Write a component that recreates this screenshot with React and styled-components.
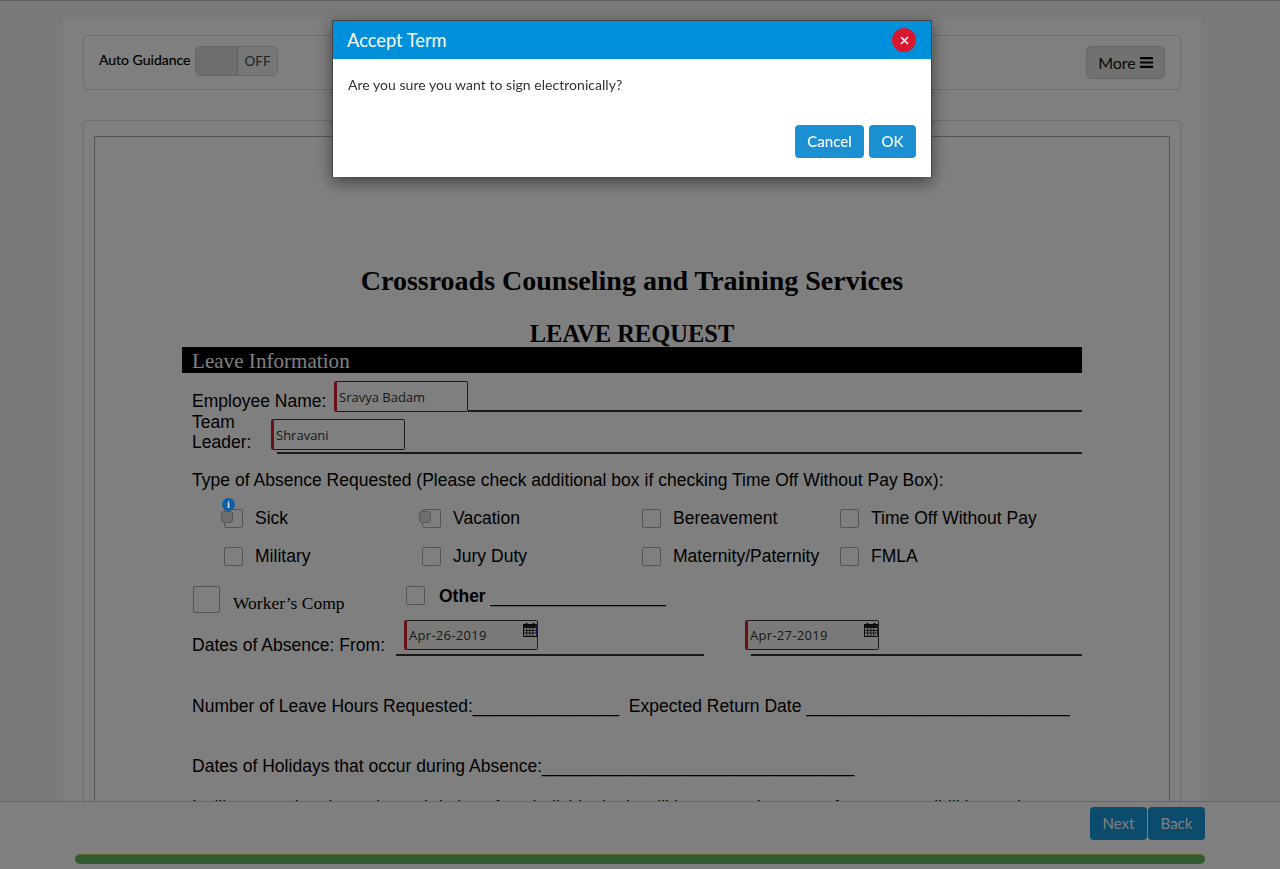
import React from "react";
import styled, { createGlobalStyle } from "styled-components";

const Global = createGlobalStyle`
  html, body { margin: 0; height: 100%; overflow: hidden; background: #f4f4f4; }
  * { box-sizing: border-box; }
`;
const UI = `"Open Sans", "Noto Sans", sans-serif`;
const SANS = `"Liberation Sans", Arial, sans-serif`;
const SERIF = `"Liberation Serif", "Times New Roman", serif`;

const Page = styled.div`
  height: 869px; overflow: hidden; border-top: 1px solid #c4c4c4;
`;
const Container = styled.main`
  width: 1138px; margin: 18px 0 0 63px; padding: 16px 20px 0; background: #fff; height: 900px;
`;
const TopPanel = styled.section`
  height: 55px; border: 1px solid #ddd; border-radius: 4px; padding: 10px 15px 0 15px;
  display: flex; justify-content: space-between; align-items: flex-start;
`;
const GuideLabel = styled.div`display: flex; align-items: flex-start;`;
const GuideText = styled.span`
  font: 400 14px/28px "Lato", ${UI}; color: #000; width: 96px; white-space: nowrap; -webkit-text-stroke: 0.2px #000;
`;
const Toggle = styled.div`
  width: 83px; height: 30px; border: 1px solid #ccc; border-radius: 5px; display: flex; overflow: hidden;
`;
const ToggleOff = styled.div`width: 42px; background: #ddd; border-right: 1px solid #bbb;`;
const ToggleOn = styled.div`
  flex: 1; background: #eee; font: 400 13.5px/29px "Lato", ${UI}; color: #444; text-align: center;
`;
const MoreBtn = styled.button`
  width: 79px; height: 33px; background: #e2e2e2; border: 1px solid #ccc; border-radius: 5px; color: #111;
  font: 400 16px/1 "Lato", ${UI}; display: flex; align-items: center; justify-content: center; gap: 4px; padding: 0;
`;
const DocPanel = styled.section`
  margin-top: 30px; border: 1px solid #ddd; border-radius: 4px; padding: 15px 10px 0; height: 760px;
`;
const Doc = styled.article`
  border: 1px solid #aaa; height: 740px; padding-top: 128px;
`;
const Title = styled.h1`
  margin: 0; text-align: center; font: 700 28px/32px ${SERIF}; color: #000;
`;
const SubTitle = styled.h2`
  margin: 22px 0 0; text-align: center; font: 700 24.5px/30px ${SERIF}; color: #000;
`;
const Form = styled.div`width: 900px; margin: -2px 0 0 87px; color: #000;`;
const BlackBar = styled.div`
  height: 26px; background: #000; color: #fff; padding-left: 10px; font: 400 21px/28px ${SERIF}; letter-spacing: 0.05px;
`;
const BodyText = `font: 400 17.5px/21px ${SANS}; white-space: nowrap; letter-spacing: 0.02px;`;
const Row = styled.div`
  display: flex; align-items: flex-start; padding-left: 10px; ${BodyText}
`;
const NameRow = styled(Row)`margin-top: 8px; height: 30px;`;
const NameLabel = styled.span`padding-top: 10px; width: 142px;`;
const LeaderRow = styled(Row)`margin-top: 8px; height: 34px;`;
const LeaderLabel = styled.span`width: 79px; line-height: 20px; margin-top: -7px; white-space: normal;`;
const Rule = styled.div`
  flex: 1; border-bottom: 2px solid #333; height: 31px;
`;
const LeaderRule = styled.div`
  flex: 1; margin-left: 6px; border-bottom: 2px solid #333; height: 35px;
`;
const Field = styled.div`
  width: 134px; height: ${p => p.$date ? 30 : 31}px; margin-left: ${p => p.$ml || 0}px;
  border: 1px solid #333; border-left: 3px solid #d3232f; border-radius: 2px;
  background: ${p => p.$date ? "#f6f4f2" : "transparent"}; position: relative;
  font: 400 13px/${p => p.$date ? 29 : 30}px ${UI}; padding-left: 2px; color: #333; flex: none;
  letter-spacing: ${p => p.$date ? 0.3 : 0}px;
`;
const CalIcon = styled.svg`position: absolute; top: 1px; right: 0; width: 14px; height: 15px;`;
const Question = styled.div`
  padding-left: 10px; margin-top: 17px; ${BodyText}
`;
const BoxGrid = styled.div`
  margin: 17px 0 0 42px; display: grid; grid-template-columns: 198px 220px 198px auto; row-gap: 17px;
`;
const BoxItem = styled.label`
  display: flex; align-items: center; gap: 12px; height: 21px; position: relative; ${BodyText}
`;
const Box = styled.span`
  width: ${p => p.$s || 19}px; height: ${p => p.$s || 19}px; border: 1px solid #aaa; border-radius: 2px; flex: none; background: #fff;
`;
const MiniBox = styled.span`
  position: absolute; left: -3px; top: 3px; width: 12px; height: 12px; border-radius: 3px;
  background: #dcdcdc; border: 1px solid #aaa;
`;
const InfoBadge = styled.span`
  position: absolute; left: -2px; top: -10px; width: 13px; height: 13px; border-radius: 50%; background: #0e5ea6;
  color: #ddd; font: 700 11px/13px ${SERIF}; text-align: center; z-index: 1;
`;
const OtherRow = styled.div`display: flex; margin: 19px 0 0 11px; height: 29px;`;
const Comp = styled.div`
  display: flex; align-items: flex-start; width: 213px; gap: 13px; font: 400 17.5px/34px ${SERIF};
`;
const OtherItem = styled.div`
  display: flex; gap: 14px; font: 700 17.5px/21px ${SANS}; white-space: nowrap;
`;
const OtherLine = styled.span`font-weight: 400;`;
const DateRow = styled(Row)`margin-top: 5px; height: 30px;`;
const DateLabel = styled.span`width: 204px; padding-top: 15px;`;
const DateGroup = styled.div`
  width: ${p => p.$w}px; margin-right: ${p => p.$mr || 0}px; border-bottom: 2px solid #333; height: 36px;
`;
const TextLine = styled.div`
  padding-left: 10px; margin-top: ${p => p.$mt}px; ${BodyText}
`;
const Footer = styled.footer`
  position: fixed; left: 0; right: 0; bottom: 0; height: 68px; background: #fff; border-top: 1px solid #ccc;
  padding: 5px 75px 0;
`;
const FooterBtns = styled.div`display: flex; justify-content: flex-end; gap: 1px;`;
const NavBtn = styled.button`
  width: 57px; height: 33px; background: #1696dc; color: #fff; border: 0; border-radius: 4px; padding: 0;
  font: 400 15px/33px "Lato", ${UI};
`;
const Progress = styled.div`
  margin-top: 14px; height: 10px; border-radius: 5px; background: #5eb95e; border-top: 1px solid #bcc05e;
`;
const Overlay = styled.div`position: fixed; inset: 0; background: rgba(0,0,0,0.5);`;
const Modal = styled.div`
  position: fixed; left: 332px; top: 20px; width: 600px; height: 157px; background: #fff; border: 1px solid #444; border-bottom: 0;
  box-shadow: 0 5px 15px rgba(0,0,0,0.5);
`;
const ModalHead = styled.div`
  height: 38px; background: #0090d9; display: flex; align-items: center; justify-content: space-between; padding: 0 15px 0 14px;
  color: #fff; font: 400 18.3px/1 "Lato", ${UI};
`;
const Close = styled.button`
  width: 24px; height: 24px; border: 0; border-radius: 50%; background: #d8182f; color: #fff; padding: 0;
  display: flex; align-items: center; justify-content: center;
`;
const ModalBody = styled.div`
  padding: 17px 15px 0; font: 400 14px/17px "Lato", ${UI}; color: #333; height: 66px; letter-spacing: 0.03px;
`;
const ModalFoot = styled.div`display: flex; justify-content: flex-end; gap: 5px; padding-right: 15px;`;
const ModalBtn = styled.button`
  height: 33px; width: ${p => p.$w}px; background: #1a90d2; color: #fff; border: 0; border-radius: 4px; padding: 0;
  font: 500 15px/33px "Lato", ${UI};
`;

const Calendar = () => (
  <CalIcon viewBox="0 0 14 15">
    <rect x="0.5" y="2.5" width="13" height="12" fill="#f4f4f4" stroke="#111" />
    <rect x="1" y="3" width="12" height="3" fill="#222" />
    <path d="M3.5 1v3M10.5 1v3" stroke="#111" strokeWidth="2" />
    <path d="M1 8.5h12M1 11h12M3.8 6v8M6.8 6v8M9.8 6v8" stroke="#333" strokeWidth="1" />
    <path d="M13.5 3v11" stroke="#1a3f9a" />
  </CalIcon>
);

export default function App() {
  const boxes = ["Sick", "Vacation", "Bereavement", "Time Off Without Pay", "Military", "Jury Duty", "Maternity/Paternity", "FMLA"];
  return (
    <>
      <Global />
      <Page>
        <Container>
          <TopPanel>
            <GuideLabel>
              <GuideText>Auto Guidance</GuideText>
              <Toggle><ToggleOff /><ToggleOn>OFF</ToggleOn></Toggle>
            </GuideLabel>
            <MoreBtn>More
              <svg width="13" height="11" viewBox="0 0 13 11"><path d="M0 1.2h13M0 5.5h13M0 9.8h13" stroke="#000" strokeWidth="2.2" /></svg>
            </MoreBtn>
          </TopPanel>
          <DocPanel>
            <Doc>
              <Title>Crossroads Counseling and Training Services</Title>
              <SubTitle>LEAVE REQUEST</SubTitle>
              <Form>
                <BlackBar>Leave Information</BlackBar>
                <NameRow>
                  <NameLabel>Employee Name:</NameLabel>
                  <Field>Sravya Badam</Field>
                  <Rule />
                </NameRow>
                <LeaderRow>
                  <LeaderLabel>Team Leader:</LeaderLabel>
                  <LeaderRule><Field $ml={-6}>Shravani</Field></LeaderRule>
                </LeaderRow>
                <Question>Type of Absence Requested (Please check additional box if checking Time Off Without Pay Box):</Question>
                <BoxGrid>
                  {boxes.map((b, i) => (
                    <BoxItem key={b}>
                      <Box />
                      {i === 0 && <InfoBadge>i</InfoBadge>}
                      {i < 2 && <MiniBox />}
                      {b}
                    </BoxItem>
                  ))}
                </BoxGrid>
                <OtherRow>
                  <Comp><Box $s={27} />Worker’s Comp</Comp>
                  <OtherItem><Box /><span>Other <OtherLine>__________________</OtherLine></span></OtherItem>
                </OtherRow>
                <DateRow>
                  <DateLabel>Dates of Absence: From:</DateLabel>
                  <DateGroup $w={308} $mr={47}>
                    <Field $date $ml={8}>Apr-26-2019<Calendar /></Field>
                  </DateGroup>
                  <DateGroup $w={331}>
                    <Field $date $ml={-6}>Apr-27-2019<Calendar /></Field>
                  </DateGroup>
                </DateRow>
                <TextLine $mt={46}>Number of Leave Hours Requested:_______________&nbsp; Expected Return Date ___________________________</TextLine>
                <TextLine $mt={39}>Dates of Holidays that occur during Absence:________________________________</TextLine>
                <TextLine $mt={20}>I will ensure that the tasks and duties of my individual role will be covered as part of my responsibilities and</TextLine>
              </Form>
            </Doc>
          </DocPanel>
        </Container>
      </Page>
      <Footer>
        <FooterBtns><NavBtn>Next</NavBtn><NavBtn>Back</NavBtn></FooterBtns>
        <Progress />
      </Footer>
      <Overlay />
      <Modal>
        <ModalHead>Accept Term
          <Close aria-label="Close">
            <svg width="9" height="9" viewBox="0 0 9 9"><path d="M1 1l7 7M8 1l-7 7" stroke="#fff" strokeWidth="1.6" /></svg>
          </Close>
        </ModalHead>
        <ModalBody>Are you sure you want to sign electronically?</ModalBody>
        <ModalFoot><ModalBtn $w={69}>Cancel</ModalBtn><ModalBtn $w={47}>OK</ModalBtn></ModalFoot>
      </Modal>
    </>
  );
}
